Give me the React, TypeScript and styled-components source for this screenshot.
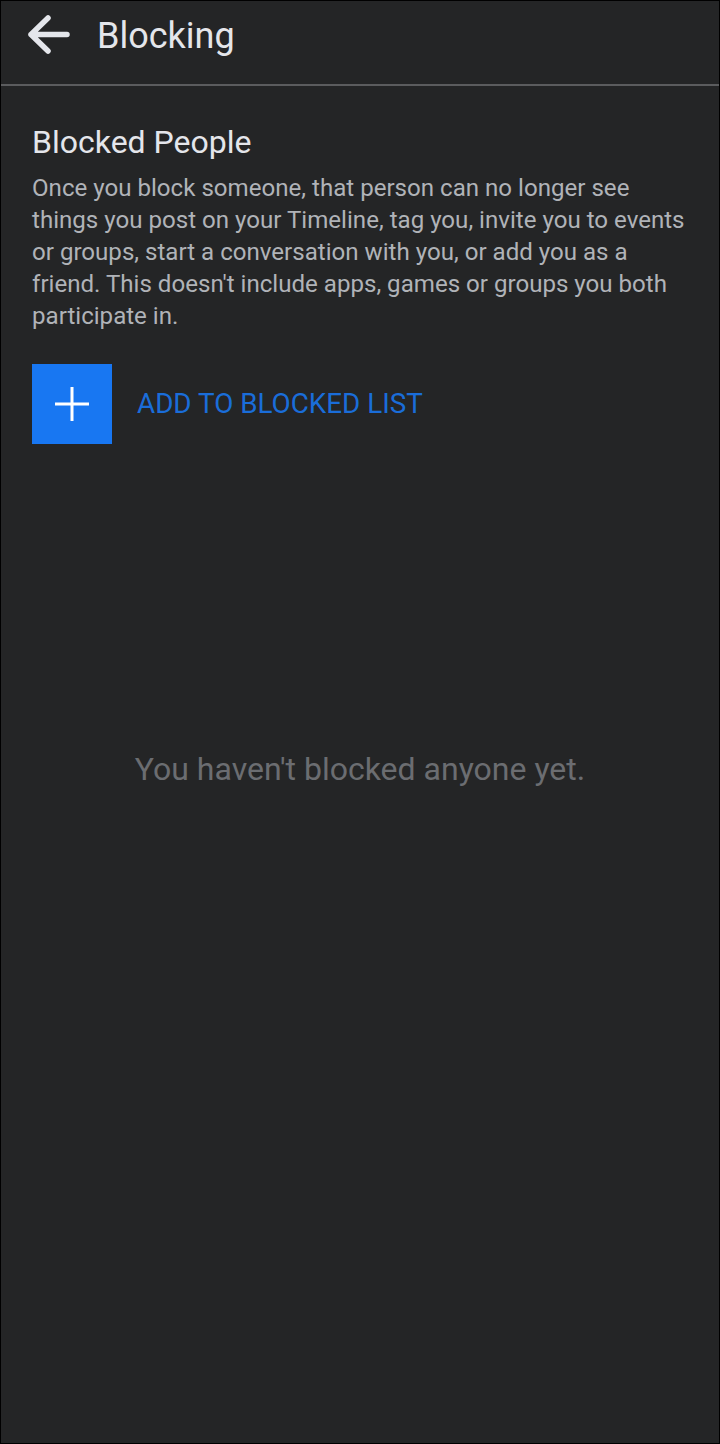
import styled, {createGlobalStyle} from 'styled-components';

const GlobalStyle = createGlobalStyle`
  html, body {
    margin: 0;
    padding: 0;
    background: #242526;
  }
  * {
    box-sizing: border-box;
  }
`;

export default function App() {
  return (
    <>
      <GlobalStyle />
      <Screen>
        <Header>
          <BackButton aria-label="Back">
            <svg width="44" height="40" viewBox="0 0 44 40" fill="none">
              <path
                d="M4 19.5H40M21 3L4 19.5L21 36"
                stroke="#e4e6eb"
                strokeWidth="5.5"
                strokeLinecap="round"
                strokeLinejoin="round"
              />
            </svg>
          </BackButton>
          <Title>Blocking</Title>
        </Header>
        <Content>
          <SectionTitle>Blocked People</SectionTitle>
          <Description>
            Once you block someone, that person can no longer see things you post on your Timeline,
            tag you, invite you to events or groups, start a conversation with you, or add you as a
            friend. This doesn't include apps, games or groups you both participate in.
          </Description>
          <AddRow>
            <AddIcon>
              <svg width="34" height="34" viewBox="0 0 34 34">
                <path d="M17 0V34M0 17H34" stroke="#ffffff" strokeWidth="3" />
              </svg>
            </AddIcon>
            <AddLabel>ADD TO BLOCKED LIST</AddLabel>
          </AddRow>
        </Content>
        <EmptyState>You haven't blocked anyone yet.</EmptyState>
      </Screen>
    </>
  );
}

const Screen = styled.div`
  display: flex;
  flex-direction: column;
  width: 720px;
  height: 1444px;
  background: #242526;
  border: 1px solid #000;
  font-family: Roboto, 'Liberation Sans', sans-serif;
`;

const Header = styled.header`
  display: flex;
  align-items: flex-start;
  height: 85px;
  padding: 0 0 0 26px;
  border-bottom: 2px solid #5b5c5e;
  flex-shrink: 0;
`;

const BackButton = styled.button`
  all: unset;
  display: flex;
  width: 44px;
  height: 40px;
  margin-top: 13.5px;
  cursor: pointer;
`;

const Title = styled.h1`
  margin: 16.5px 0 0 26px;
  font-size: 36px;
  font-weight: 400;
  color: #e4e6eb;
  line-height: 36px;
`;

const Content = styled.section`
  display: flex;
  flex-direction: column;
  padding: 36px 24px 0 31px;
`;

const SectionTitle = styled.h2`
  margin: 0;
  font-size: 32px;
  font-weight: 400;
  line-height: 40px;
  color: #e4e6eb;
`;

const Description = styled.p`
  margin: 10px 0 0;
  font-size: 24.1px;
  line-height: 32px;
  color: #b0b3b8;
`;

const AddRow = styled.div`
  display: flex;
  align-items: center;
  gap: 25px;
  margin-top: 32px;
  cursor: pointer;
`;

const AddIcon = styled.div`
  display: flex;
  align-items: center;
  justify-content: center;
  width: 80px;
  height: 80px;
  background: #1877f2;
`;

const AddLabel = styled.span`
  font-size: 27.8px;
  color: #1a6dd9;
  line-height: 1;
`;

const EmptyState = styled.p`
  margin: 305px 0 0;
  text-align: center;
  font-size: 32px;
  line-height: 40px;
  color: #6b6d71;
`;
